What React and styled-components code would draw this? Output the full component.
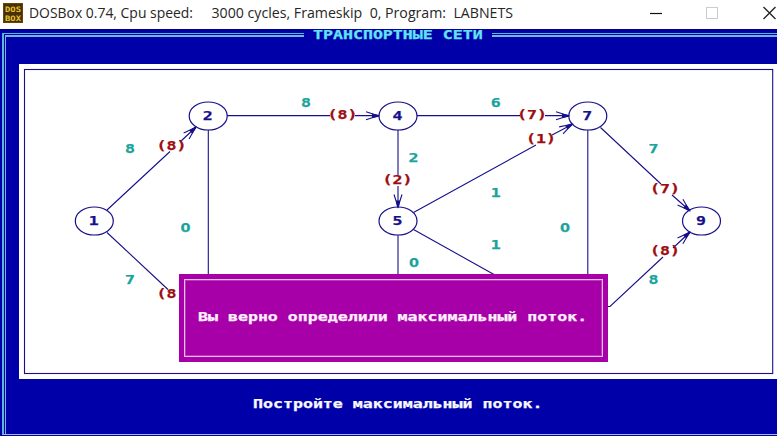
import React from "react";
import styled, { createGlobalStyle } from "styled-components";

const NAVY = "#0000a8";
const INK = "#17108a";
const CYAN = "#62e4f8";
const TEAL = "#18a39c";
const RED = "#9c0c10";
const MONO = '"DejaVu Sans Mono", "Liberation Mono", monospace';

const GlobalStyle = createGlobalStyle`
  * { box-sizing: border-box; }
  html, body { margin: 0; padding: 0; overflow: hidden; background: #fff; }
`;

const Window = styled.div`
  width: 777px;
  height: 436px;
  overflow: hidden;
  display: flex;
  flex-direction: column;
  background: #fff;
`;

const TitleBar = styled.header`
  height: 29px;
  flex: none;
  display: flex;
  align-items: center;
  padding: 0 0 3px 3px;
  background: #fff;
`;

const Title = styled.div`
  flex: 1;
  margin-left: 6px;
  color: #222;
`;

const Controls = styled.div`
  display: flex;
  width: 127px;
  flex: none;
`;

const LogoBox = styled.div`
  width: 20px;
  height: 20px;
  padding: 1px 0;
  display: grid;
  grid-template-rows: 9px 9px;
  border: 1px solid #68430d;
  background: #4a3008;
  padding: 0 0 0 1px;
`;

const Screen = styled.main`
  position: relative;
  height: 407px;
  background: ${NAVY};
  border-top: 1px solid #000078;
  padding: 34px 0 0 19px;
`;

const Frame = styled.div`
  position: absolute;
  inset: 3px -10px 1px 2px;
  border: solid #5cb4dc;
  border-width: 1px 0 1px 2px;
  border-bottom-color: #a8b8ec;
`;

const InnerFrame = styled.div`
  height: 399px;
  margin-left: 1px;
  margin-top: 1px;
  border: solid #68bce4;
  border-width: 2px 0 0 1px;
`;

const Heading = styled.h1`
  position: absolute;
  left: 304px;
  top: -1px;
  width: 188px;
  height: 13px;
  margin: 0;
  background: ${NAVY};
`;

const Panel = styled.section`
  width: 758px;
  height: 315px;
  background: #fff;
`;

const Footer = styled.footer`
  height: 50px;
  padding: 19px 0 0 234px;
`;

const Dialog = styled.div`
  position: absolute;
  left: 179px;
  top: 244px;
  width: 429px;
  height: 88px;
  padding: 5px;
  background: #a800a8;
`;

const DialogBody = styled.div`
  width: 419px;
  height: 78px;
  border: 1.5px solid #edbfed;
  outline: 1px solid #b939b9;
  outline-offset: -2px;
  padding: 31px 0 0 13px;
`;

const Line = styled.svg`
  display: block;
  overflow: visible;
`;

const DosText = styled.text`
  font: bold ${(p) => p.$size || 11}px ${MONO};
  fill: ${(p) => p.$color};
  stroke: ${(p) => p.$color};
  stroke-width: ${(p) => (p.$thin ? 0 : 0.25)}px;
`;

const TitleText = styled.text`
  font: 15px "Open Sans", sans-serif;
  fill: #262626;
  white-space: pre;
`;

const Stroke = styled.g`
  fill: none;
  stroke: ${INK};
  stroke-width: 1.1;
`;

const CELL = 9.98;

function DosLine({ children, color, size }) {
  const w = children.length * CELL;
  return (
    <Line width={w} height="14">
      <DosText $color={color} $size={size} x="0" y="10" textLength={w} lengthAdjust="spacingAndGlyphs">
        {children}
      </DosText>
    </Line>
  );
}

function GraphLabel({ x, y, color, children }) {
  const w = children.length * CELL;
  return (
    <DosText $color={color} $size={12} x={x - w / 2} y={y + 4.4} textLength={w} lengthAdjust="spacingAndGlyphs">
      {children}
    </DosText>
  );
}

const nodes = [
  ["1", 94.3, 221],
  ["2", 208.2, 116],
  ["4", 398, 116],
  ["5", 398, 221],
  ["7", 587.8, 116],
  ["9", 701.5, 221],
];

const edges = [
  "M107 210L170 151.5M180 142L195 128",
  "M107 232.5L168 289.5",
  "M208.3 130V275",
  "M227 115.6H330M355 115.6H378",
  "M417 115.6H520M545 115.6H568",
  "M398 130V175M398 186V207",
  "M398 235V275",
  "M413.5 212.5L536 145M552 135L572 124.5",
  "M413.5 229.5L494 274.5",
  "M587.8 130V275",
  "M600.5 127.5L661 184M672 195L689 210",
  "M608 306.5H610L663 257M673 248L689 233",
];

const arrows = [
  [195.5, 127.5, -43],
  [378.5, 115.8, 0],
  [568.5, 115.8, 0],
  [398, 207, 90],
  [572, 124.3, -29],
  [689.5, 210.5, 42],
  [689.5, 232.5, -42],
];

const capacities = [
  ["8", 130, 149],
  ["7", 130, 280],
  ["0", 185.5, 227.5],
  ["8", 306, 102.5],
  ["6", 495.7, 102.5],
  ["2", 413.5, 157.5],
  ["0", 414, 262.5],
  ["1", 495.7, 192.5],
  ["1", 495.7, 245],
  ["0", 565, 227.5],
  ["7", 653.5, 149],
  ["8", 653.5, 280],
];

const flows = [
  ["(8)", 171.5, 146],
  ["(8)", 171.5, 293.5],
  ["(8)", 342.5, 114.5],
  ["(7)", 532, 114.5],
  ["(2)", 397.5, 180],
  ["(1)", 541, 138.5],
  ["(7)", 665, 188.5],
  ["(8)", 665, 251],
];

function Network() {
  return (
    <Line width="758" height="315" viewBox="19 64 758 315">
      <Stroke>
        <rect x="24.5" y="69.5" width="748.2" height="304" />
        {edges.map((d) => (
          <path key={d} d={d} />
        ))}
        {nodes.map(([n, x, y]) => (
          <ellipse key={n} cx={x} cy={y} rx="19" ry="14" strokeWidth="1.2" />
        ))}
        {arrows.map(([x, y, r]) => (
          <g key={`${x}-${y}`} transform={`translate(${x} ${y}) rotate(${r})`}>
            <path d="M-12.5-4L0 0L-12.5 4" />
            <path d="M-6-1.6L0-.4V.4L-6 1.6Z" fill={INK} />
          </g>
        ))}
      </Stroke>
      {nodes.map(([n, x, y]) => (
        <GraphLabel key={n} x={x - 0.5} y={y} color={INK}>{n}</GraphLabel>
      ))}
      {capacities.map(([n, x, y]) => (
        <GraphLabel key={`${x}-${y}`} x={x} y={y} color={TEAL}>{n === "0" ? "O" : n}</GraphLabel>
      ))}
      {flows.map(([n, x, y]) => (
        <GraphLabel key={`${x}-${y}`} x={x} y={y} color={RED}>{n}</GraphLabel>
      ))}
    </Line>
  );
}

function Logo() {
  return (
    <LogoBox>
      {["DOS", "BOX"].map((word) => (
        <Line key={word} width="16" height="9">
          <DosText $thin $color="#e5c42b" $size={7.5} x="0" y="7.5" textLength="16" lengthAdjust="spacingAndGlyphs">
            {word}
          </DosText>
        </Line>
      ))}
    </LogoBox>
  );
}

export default function App() {
  return (
    <Window>
      <GlobalStyle />
      <TitleBar>
        <Logo />
        <Title>
          <Line width="490" height="20">
            <TitleText x="0" y="15" textLength="164" lengthAdjust="spacingAndGlyphs">DOSBox 0.74, Cpu speed:</TitleText>
            <TitleText x="182.5" y="15" textLength="301.5" lengthAdjust="spacingAndGlyphs">3000 cycles, Frameskip  0, Program:  LABNETS</TitleText>
          </Line>
        </Title>
        <Controls>
          <Line width="127" height="14" fill="none">
            <path d="M0 7.5H12" stroke="#111" strokeWidth="1.2" />
            <rect x="56.5" y="1.5" width="11" height="11" stroke="#ccc" />
            <path d="M113.5 1L125.5 13M125.5 1L113.5 13" stroke="#222" strokeWidth="1.3" />
          </Line>
        </Controls>
      </TitleBar>
      <Screen>
        <Frame>
          <InnerFrame />
        </Frame>
        <Heading>
          <Line width="188" height="13">
            <DosText $color={CYAN} $size={12} x="9" y="10" textLength={17 * CELL} lengthAdjust="spacingAndGlyphs">
              ТРАНСПОРТНЫЕ СЕТИ
            </DosText>
          </Line>
        </Heading>
        <Panel>
          <Network />
        </Panel>
        <Footer>
          <DosLine color="#f8f8ff" size={11.5}>Постройте максимальный поток.</DosLine>
        </Footer>
        <Dialog>
          <DialogBody>
            <DosLine color="#fff0ff" size={11.5}>Вы верно определили максимальный поток.</DosLine>
          </DialogBody>
        </Dialog>
      </Screen>
    </Window>
  );
}
